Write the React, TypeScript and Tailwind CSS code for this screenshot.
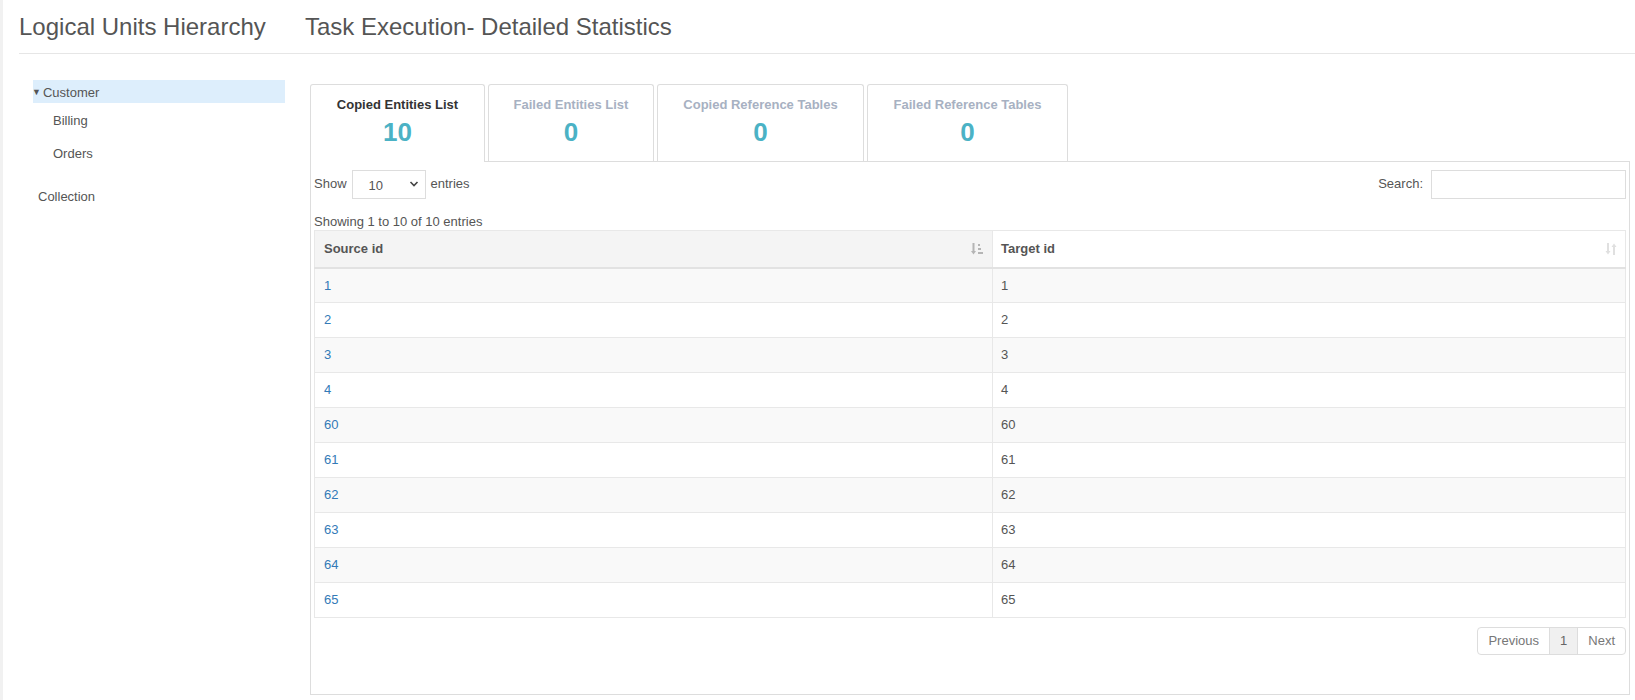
import React from 'react';

const rows = [1, 2, 3, 4, 60, 61, 62, 63, 64, 65];

const tabs = [
  { label: 'Copied Entities List', count: 10, width: 'w-[175px]', active: true },
  { label: 'Failed Entities List', count: 0, width: 'w-[166px]', active: false },
  { label: 'Copied Reference Tables', count: 0, width: 'w-[207px]', active: false },
  { label: 'Failed Reference Tables', count: 0, width: 'w-[201px]', active: false },
];

function SortedIcon() {
  // arrow down + stacked bars (sorted ascending)
  return (
    <svg width="12" height="14" viewBox="0 0 12 14" className="text-[#b5b5b5]">
      <path d="M2.5 1v9" stroke="currentColor" strokeWidth="2" />
      <path d="M0 9h5l-2.5 3.5z" fill="currentColor" />
      <rect x="7" y="2" width="2" height="2" fill="currentColor" />
      <rect x="7" y="6" width="3" height="2" fill="currentColor" />
      <rect x="7" y="10" width="5" height="2" fill="currentColor" />
    </svg>
  );
}

function BothIcon() {
  return (
    <svg width="12" height="14" viewBox="0 0 12 14" className="text-[#e0e0e0]">
      <path d="M3 1v9" stroke="currentColor" strokeWidth="2" />
      <path d="M0.5 9h5l-2.5 3.5z" fill="currentColor" />
      <path d="M9 4v9" stroke="currentColor" strokeWidth="2" />
      <path d="M6.5 5h5L9 1.5z" fill="currentColor" />
    </svg>
  );
}

export default function App() {
  return (
    <div className="flex min-h-[700px] bg-white font-['Liberation_Sans',Arial,sans-serif] text-[13px] text-[#555]">
      <div className="w-[3px] shrink-0 bg-[#f1f1f1]" />
      <div className="flex-1 pl-[16px]">
        {/* Header */}
        <div className="flex h-[54px] items-center border-b border-[#e6e6e6] text-[24px] text-[#555]">
          <h1 className="w-[286px] pt-[1px]">Logical Units Hierarchy</h1>
          <h1 className="pt-[1px]">Task Execution- Detailed Statistics</h1>
        </div>

        <div className="flex">
          {/* Sidebar */}
          <div className="w-[291px] shrink-0 pl-[14px] pr-[25px] pt-[26px]">
            <div className="flex h-[23px] items-center bg-[#ddeefc] pt-[2px] text-[#555]">
              <span className="ml-[-1px] mr-[2px] text-[9px] leading-none">▼</span>
              <span>Customer</span>
            </div>
            <div className="ml-[20px] flex h-[30px] items-center pt-[6px]">Billing</div>
            <div className="ml-[20px] flex h-[33px] items-center pt-[8px]">Orders</div>
            <div className="ml-[5px] mt-[20px] flex h-[22px] items-center">Collection</div>
          </div>

          {/* Content */}
          <div className="mr-[5px] flex-1 pt-[30px]">
            <div className="flex gap-[3px]">
              {tabs.map(t => (
                <div
                  key={t.label}
                  className={
                    t.active
                      ? `${t.width} relative z-10 mb-[-1px] flex h-[78px] flex-col items-center rounded-t-[3px] border border-b-0 border-[#ddd] bg-white pt-[10px]`
                      : `${t.width} flex h-[77px] flex-col items-center rounded-t-[3px] border border-b-0 border-[#ddd] bg-white pt-[10px]`
                  }
                >
                  <div className={t.active ? 'font-bold text-[#333]' : 'font-bold text-[#a7b1c2]'}>{t.label}</div>
                  <div className="mt-[1px] text-[26px] font-bold leading-[32px] text-[#4bb2c5]">{t.count}</div>
                </div>
              ))}
            </div>

            <div className="h-[534px] border border-[#ddd] px-[3px] pt-[7px]">
              <div className="flex h-[30px] items-center justify-between">
                <div className="flex items-center">
                  <span>Show</span>
                  <div className="ml-[5px] flex h-[29px] w-[74px] items-center justify-between border border-[#ddd] pl-[16px] pr-[6px] text-[#555]">
                    <span className="pt-[3px]">10</span>
                    <svg width="10" height="8" viewBox="0 0 10 8">
                      <path d="M1.5 2l3.5 3.5L8.5 2" stroke="#444" strokeWidth="1.6" fill="none" />
                    </svg>
                  </div>
                  <span className="ml-[5px]">entries</span>
                </div>
                <div className="flex items-center">
                  <span>Search:</span>
                  <div className="ml-[8px] h-[29px] w-[195px] border border-[#ddd]" />
                </div>
              </div>

              <div className="mt-[8px] h-[23px] pt-[5px]">Showing 1 to 10 of 10 entries</div>

              <table className="w-full border-collapse">
                <thead>
                  <tr className="h-[37px] border-b-2 border-[#e2e2e2]">
                    <th className="w-[678px] border border-b-0 border-[#e8e8e8] bg-[#f4f4f4] px-[9px] text-left font-bold">
                      <div className="flex items-center justify-between">
                        <span>Source id</span>
                        <SortedIcon />
                      </div>
                    </th>
                    <th className="border border-b-0 border-[#e8e8e8] bg-white px-[8px] text-left font-bold">
                      <div className="flex items-center justify-between">
                        <span>Target id</span>
                        <BothIcon />
                      </div>
                    </th>
                  </tr>
                </thead>
                <tbody>
                  {rows.map((r, i) => (
                    <tr key={r} className={i % 2 === 0 ? 'h-[35px] bg-[#f9f9f9]' : 'h-[35px] bg-white'}>
                      <td className="border border-[#e8e8e8] px-[9px] text-[#337ab7]">{r}</td>
                      <td className="border border-[#e8e8e8] px-[8px]">{r}</td>
                    </tr>
                  ))}
                </tbody>
              </table>

              <div className="mt-[9px] flex justify-end">
                <div className="flex h-[28px] items-stretch rounded-[4px] border border-[#ddd] text-[#777]">
                  <span className="flex items-center px-[10px]">Previous</span>
                  <span className="flex items-center border-x border-[#ddd] bg-[#f0f0f0] px-[10px] text-[#666]">1</span>
                  <span className="flex items-center px-[10px]">Next</span>
                </div>
              </div>
            </div>
          </div>
        </div>
      </div>
    </div>
  );
}
